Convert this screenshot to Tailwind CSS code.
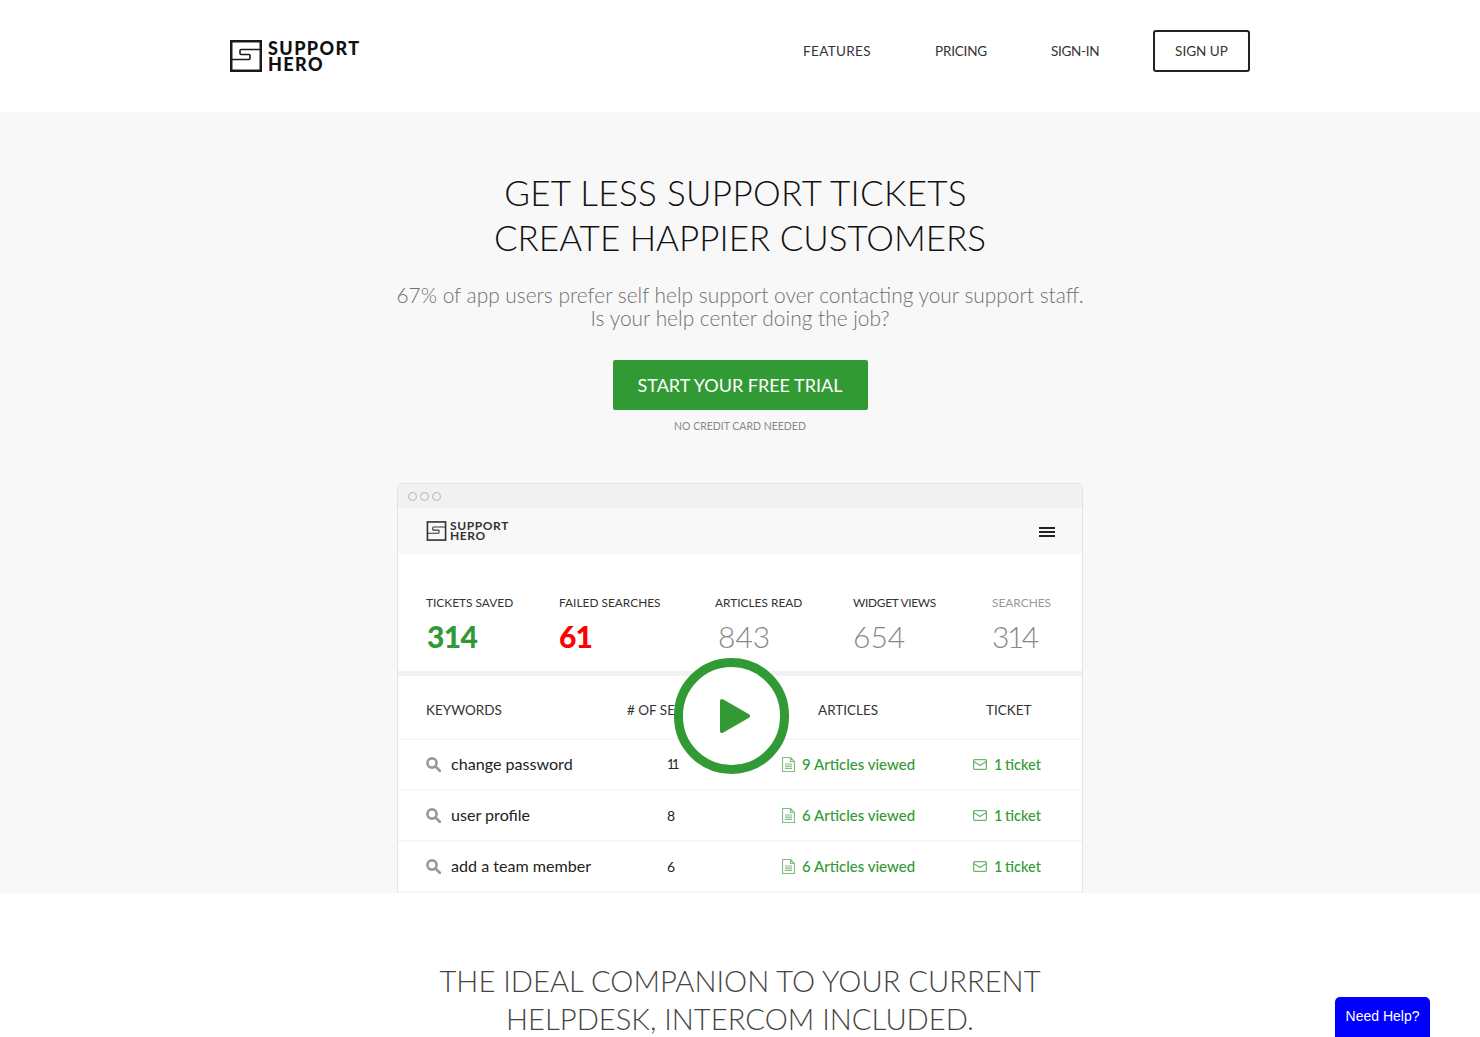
<!DOCTYPE html>
<html lang="en">
<head>
  <meta charset="UTF-8" />
  <meta name="viewport" content="width=device-width, initial-scale=1.0"/>
  <title>Support Hero</title>
  <script src="https://cdn.jsdelivr.net/npm/@tailwindcss/browser@4"></script>
</head>
<body class="bg-white font-['Lato',sans-serif] text-[#222] h-screen overflow-hidden">

  <!-- Nav -->
  <header class="h-[112px] w-[1020px] mx-auto flex items-center justify-between pb-[10px]">
    <a class="flex items-center gap-[6px] mt-[23px] mb-[13px]">
      <svg width="32" height="32" viewBox="0 0 32 32" fill="none" stroke="#1a1a1a">
        <rect x="1.25" y="1.25" width="29.5" height="29.5" stroke-width="2.5"/>
        <path d="M30 9.5H11Q10 9.5 10 11V13.5Q10 14.5 11 14.5H19Q20 14.5 20 15.5V18Q20 19.5 19 19.5H1" stroke-width="1.6"/>
      </svg>
      <div class="font-black text-[18px] tracking-[1.4px] leading-[16px] text-[#111]">SUPPORT<br>HERO</div>
    </a>
    <nav class="flex items-center text-[13.5px] text-[#333]">
      <a class="w-[132px] tracking-[.35px]">FEATURES</a>
      <a class="w-[116px] tracking-[-.2px]">PRICING</a>
      <a class="w-[102px] tracking-[-.3px]">SIGN-IN</a>
      <a class="w-[97px] h-[42px] border-2 border-[#222] rounded-[3px] flex items-center justify-center">SIGN UP</a>
    </nav>
  </header>

  <!-- Hero -->
  <section class="bg-[#f8f8f8] h-[781px] overflow-hidden flex flex-col items-center pt-[58px]">
    <h1 class="font-light text-[35px] leading-[45px] text-[#111] text-center"><span class="tracking-[.35px] mr-[9px]">GET LESS SUPPORT TICKETS</span><br>CREATE HAPPIER CUSTOMERS</h1>
    <p class="font-light text-[20.9px] leading-[23px] text-[#707070] text-center mt-[23px]">67% of app users prefer self help support over contacting your support staff.<br>Is your help center doing the job?</p>
    <a class="mt-[31px] w-[255px] h-[50px] shrink-0 bg-[#329a34] rounded-[2px] text-white text-[18px] flex items-center justify-center">START YOUR FREE TRIAL</a>
    <p class="mt-[9px] text-[10.5px] leading-[14px] text-[#888]">NO CREDIT CARD NEEDED</p>

    <!-- App mockup -->
    <div class="relative mt-[50px] w-[686px] shrink-0 bg-white border border-[#e2e2e2] rounded-t-[5px]">
      <div class="h-[24px] bg-[#f1f1f1] rounded-t-[5px] flex items-center gap-[3px] pl-[10px]">
        <span class="w-[9px] h-[9px] rounded-full border border-[#b5b5b5]"></span>
        <span class="w-[9px] h-[9px] rounded-full border border-[#b5b5b5]"></span>
        <span class="w-[9px] h-[9px] rounded-full border border-[#b5b5b5]"></span>
      </div>
      <div class="h-[46px] bg-[#f8f8f8] flex items-center justify-between pl-[28px] pr-[27px]">
        <div class="flex items-center gap-[3px]">
          <svg width="21" height="20" viewBox="0 0 32 32" fill="none" stroke="#333">
            <rect x="1.5" y="1.5" width="29" height="29" stroke-width="2.6"/>
            <path d="M30 9.5H11Q10 9.5 10 11V13.5Q10 14.5 11 14.5H19Q20 14.5 20 15.5V18Q20 19.5 19 19.5H1" stroke-width="1.8"/>
          </svg>
          <div class="font-bold text-[12px] tracking-[.6px] leading-[10.5px] text-[#333]">SUPPORT<br>HERO</div>
        </div>
        <svg width="16" height="12" viewBox="0 0 16 12" fill="#222" class="mt-[1px]">
          <rect y="1" width="16" height="2"/><rect y="5" width="16" height="2"/><rect y="9" width="16" height="2"/>
        </svg>
      </div>

      <!-- Stats -->
      <div class="h-[117px] pl-[28px] pt-[41px] grid grid-cols-[133px_156px_138px_139px_auto] text-[11.9px] leading-[16px] text-[#333]">
        <div>TICKETS SAVED<div class="font-black text-[30px] tracking-[-.7px] leading-[38px] mt-[6px] ml-[1px] text-[#329a34]">314</div></div>
        <div>FAILED SEARCHES<div class="font-black text-[30px] tracking-[-1px] leading-[38px] mt-[6px] text-[#f00]">61</div></div>
        <div>ARTICLES READ<div class="font-light text-[30px] leading-[38px] mt-[6px] ml-[3px] text-[#888]">843</div></div>
        <div class="tracking-[-.3px]">WIDGET VIEWS<div class="font-light text-[30px] tracking-normal leading-[38px] mt-[6px] text-[#888]">654</div></div>
        <div class="text-[#999]">SEARCHES<div class="font-light text-[30px] tracking-[-2.5px] leading-[38px] mt-[6px] text-[#888]">314</div></div>
      </div>
      <div class="h-[5px] bg-[#f1f1f1]"></div>

      <!-- Table -->
      <div class="h-[64px] pl-[28px] pt-[6px] grid grid-cols-[201px_191px_168px_auto] items-center text-[13.5px] text-[#333] border-b-2 border-[#f7f7f7]">
        <div>KEYWORDS</div><div># OF SEARCHES</div><div>ARTICLES</div><div>TICKET</div>
      </div>

      <div class="h-[51px] pl-[28px] grid grid-cols-[241px_115px_191px_auto] items-center border-b-2 border-[#f7f7f7]">
        <div class="flex items-center gap-[10px] text-[16.1px] text-[#222]">
          <svg width="15" height="15" viewBox="0 0 15 15" fill="none" stroke="#999" stroke-width="2.6"><circle cx="6" cy="6" r="4.6"/><path d="M9.5 9.5L14 14" stroke-linecap="round"/></svg>
          change password
        </div>
        <div class="text-[13px] text-[#222] tracking-[-2.5px]">11</div>
        <div class="flex items-center gap-[7px] text-[15px] font-medium text-[#329a34]">
          <svg width="13" height="15" viewBox="0 0 13 15" fill="none" stroke="#7fc081" stroke-width="1.2"><path d="M.5.5H8.5L12.5 4.5V14.5H.5ZM8.5.5V4.5H12.5M3 7H10M3 9.2H10M3 11.4H10"/></svg>
          9 Articles viewed
        </div>
        <div class="flex items-center gap-[7px] text-[14.5px] font-medium text-[#329a34] [word-spacing:-1px]">
          <svg width="14" height="11" viewBox="0 0 14 11" fill="none" stroke="#6db56f" stroke-width="1.3"><rect x=".6" y=".6" width="12.8" height="9.8" rx="1.5"/><path d="M.6 2.5L7 6.5L13.4 2.5"/></svg>
          1 ticket
        </div>
      </div>
      <div class="h-[51px] pl-[28px] grid grid-cols-[241px_115px_191px_auto] items-center border-b-2 border-[#f7f7f7]">
        <div class="flex items-center gap-[10px] text-[16.1px] text-[#222]">
          <svg width="15" height="15" viewBox="0 0 15 15" fill="none" stroke="#999" stroke-width="2.6"><circle cx="6" cy="6" r="4.6"/><path d="M9.5 9.5L14 14" stroke-linecap="round"/></svg>
          user profile
        </div>
        <div class="text-[14px] text-[#222]">8</div>
        <div class="flex items-center gap-[7px] text-[15px] font-medium text-[#329a34]">
          <svg width="13" height="15" viewBox="0 0 13 15" fill="none" stroke="#7fc081" stroke-width="1.2"><path d="M.5.5H8.5L12.5 4.5V14.5H.5ZM8.5.5V4.5H12.5M3 7H10M3 9.2H10M3 11.4H10"/></svg>
          6 Articles viewed
        </div>
        <div class="flex items-center gap-[7px] text-[14.5px] font-medium text-[#329a34] [word-spacing:-1px]">
          <svg width="14" height="11" viewBox="0 0 14 11" fill="none" stroke="#6db56f" stroke-width="1.3"><rect x=".6" y=".6" width="12.8" height="9.8" rx="1.5"/><path d="M.6 2.5L7 6.5L13.4 2.5"/></svg>
          1 ticket
        </div>
      </div>
      <div class="h-[51px] pl-[28px] grid grid-cols-[241px_115px_191px_auto] items-center border-b-2 border-[#f7f7f7]">
        <div class="flex items-center gap-[10px] text-[16.1px] text-[#222]">
          <svg width="15" height="15" viewBox="0 0 15 15" fill="none" stroke="#999" stroke-width="2.6"><circle cx="6" cy="6" r="4.6"/><path d="M9.5 9.5L14 14" stroke-linecap="round"/></svg>
          add a team member
        </div>
        <div class="text-[14px] text-[#222]">6</div>
        <div class="flex items-center gap-[7px] text-[15px] font-medium text-[#329a34]">
          <svg width="13" height="15" viewBox="0 0 13 15" fill="none" stroke="#7fc081" stroke-width="1.2"><path d="M.5.5H8.5L12.5 4.5V14.5H.5ZM8.5.5V4.5H12.5M3 7H10M3 9.2H10M3 11.4H10"/></svg>
          6 Articles viewed
        </div>
        <div class="flex items-center gap-[7px] text-[14.5px] font-medium text-[#329a34] [word-spacing:-1px]">
          <svg width="14" height="11" viewBox="0 0 14 11" fill="none" stroke="#6db56f" stroke-width="1.3"><rect x=".6" y=".6" width="12.8" height="9.8" rx="1.5"/><path d="M.6 2.5L7 6.5L13.4 2.5"/></svg>
          1 ticket
        </div>
      </div>

      <!-- Play button over the table -->
      <div class="absolute left-[276px] top-[174px] w-[115px] h-[116px] rounded-full bg-white border-[9px] border-[#329a34] flex items-center justify-center">
        <svg width="30" height="34" viewBox="0 0 30 34" fill="#329a34" stroke="#329a34" stroke-width="4" stroke-linejoin="round" class="ml-[6px]"><path d="M2 2L28 17L2 32Z"/></svg>
      </div>
    </div>
  </section>

  <!-- Next section -->
  <section class="pt-[69px] text-center">
    <h2 class="font-light text-[29.2px] leading-[38px] text-[#444]">THE IDEAL COMPANION TO YOUR CURRENT<br>HELPDESK, INTERCOM INCLUDED.</h2>
  </section>

  <button class="fixed right-[50px] bottom-0 w-[95px] h-[40px] pb-[2px] bg-[#0000ff] text-white text-[14px] font-['Liberation_Sans',sans-serif] rounded-t-[5px]">Need Help?</button>
</body>
</html>
